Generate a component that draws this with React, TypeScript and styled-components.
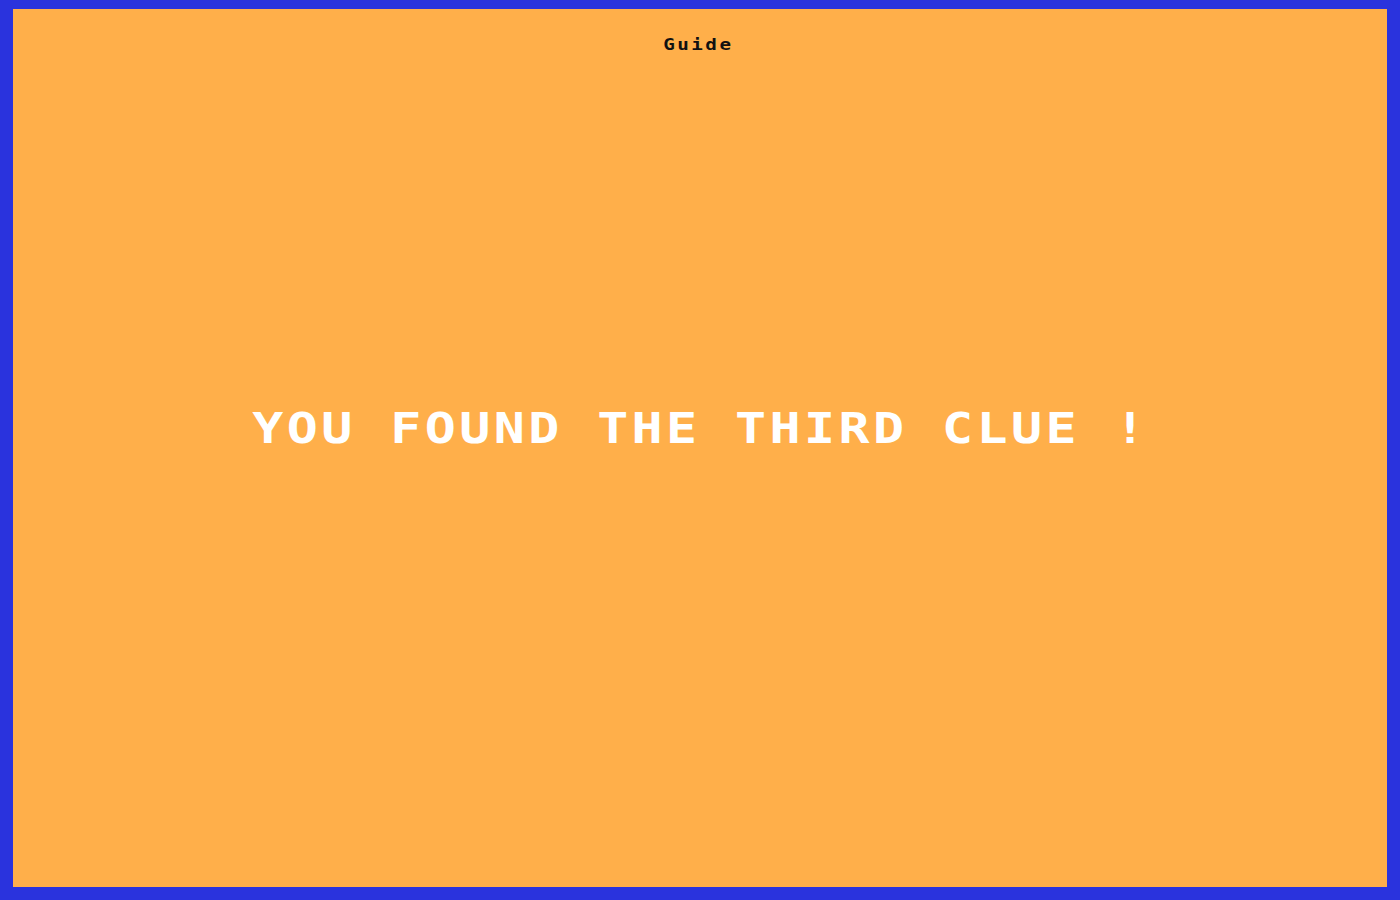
import React from "react";
import styled, { createGlobalStyle } from "styled-components";

const Global = createGlobalStyle`
  html, body {
    margin: 0;
    padding: 0;
    background: #2a33dd;
  }
  body {
    font-family: "DejaVu Sans Mono", "Liberation Mono", monospace;
  }
`;

const Frame = styled.div`
  box-sizing: border-box;
  width: 1400px;
  height: 900px;
  padding: 9px 13px 13px 13px;
  background: #2a33dd;
  display: flex;
`;

const Screen = styled.main`
  flex: 1;
  background: #ffaf4a;
  display: flex;
  flex-direction: column;
`;

const Header = styled.header`
  display: flex;
  justify-content: center;
  padding-top: 27px;
`;

const Title = styled.h1`
  margin: 0 4px 0 0;
  font-family: "DejaVu Sans Mono", monospace;
  font-weight: bold;
  font-size: 16px;
  line-height: 18px;
  letter-spacing: 2.1px;
  color: #111;
  transform: scaleX(1.2);
`;

const Stage = styled.section`
  flex: 1;
  display: flex;
  align-items: center;
  justify-content: center;
  padding-bottom: 86px;
`;

const Message = styled.p`
  margin: 0 0 0 2px;
  font-family: "DejaVu Sans Mono", monospace;
  font-weight: bold;
  font-size: 43px;
  line-height: 50px;
  letter-spacing: 2.85px;
  color: #ffffff;
  white-space: pre;
  transform: scaleX(1.2);
`;

export default function App() {
  return (
    <>
      <Global />
      <Frame>
        <Screen>
          <Header>
            <Title>Guide</Title>
          </Header>
          <Stage>
            <Message>YOU FOUND THE THIRD CLUE !</Message>
          </Stage>
        </Screen>
      </Frame>
    </>
  );
}
